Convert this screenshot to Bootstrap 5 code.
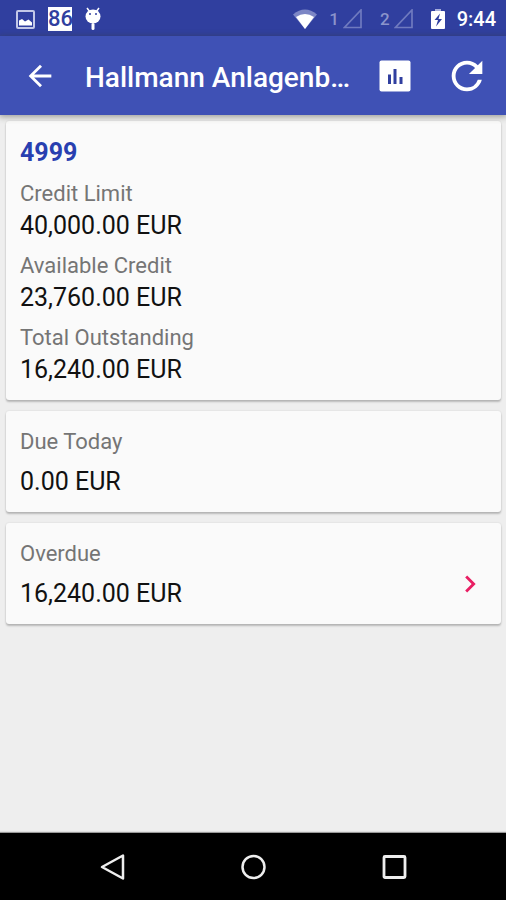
<!DOCTYPE html>
<html lang="en">
<head>
<meta charset="utf-8">
<meta name="viewport" content="width=device-width, initial-scale=1">
<title>Hallmann Anlagenbau – Credit</title>
<link href="https://cdn.jsdelivr.net/npm/bootstrap@5.3.0/dist/css/bootstrap.min.css" rel="stylesheet">
<style>
  body { background: #eee; font-family: Roboto, "Liberation Sans", sans-serif; }
  svg { display: block; flex: none; }
  .status-bar { background: #303f9f; height: 36px; padding: 2px 10px 0 16px; color: #fff; }
  .status-bar .sim { color: #8b94cb; font-size: 17px; font-weight: 500; line-height: 20px; }
  .count-badge { background: #fff; color: #303f9f; width: 24px; height: 24px; font-size: 22px; font-weight: 500; line-height: 24px; text-align: center; margin: 0 10px 0 13px; }
  .signals { gap: 18px; }
  .wifi { margin-right: 12px; }
  .clock { font-size: 20px; font-weight: 500; line-height: 24px; }
  .app-bar { background: #3f51b5; height: 79px; padding: 0 16px 0 23px; box-shadow: 0 1px 6px 1px rgba(60, 65, 50, .45); z-index: 1; }
  .app-bar h1 { color: #fff; font-size: 28px; font-weight: 500; line-height: 36px; }
  .app-bar .btn { --bs-btn-color: #fff; --bs-btn-hover-color: #fff; --bs-btn-active-color: #fff; }
  .refresh { margin-left: 33px; }
  .panels { display: grid; gap: 11px; padding: 6px 5px 6px 6px; }
  .panel { --bs-card-bg: #fafafa; --bs-card-border-width: 0; --bs-card-border-radius: 3px; padding: 15px 14px 14px; box-shadow: 0 2px 2px rgba(0, 0, 0, .22), 0 0 2px rgba(0, 0, 0, .12); color: #111; }
  .account { color: #283fb0; font-size: 25px; font-weight: 700; line-height: 34px; margin-bottom: 8px; }
  .figures { display: grid; gap: 8px; }
  dt { color: #757575; font-size: 22px; font-weight: 400; line-height: 32px; }
  dd { margin: 0; font-size: 25px; line-height: 32px; }
  .open-overdue { margin-bottom: 9px; }
  .nav-keys { background: #000; height: 67px; box-shadow: 0 -1px 1px #999; }
  .nav-keys .btn { width: 28%; }
</style>
</head>
<body class="d-flex flex-column min-vh-100">
<div class="status-bar d-flex align-items-center justify-content-between">
  <div class="d-flex align-items-center">
    <svg width="19" height="19" viewBox="0 0 19 19" aria-hidden="true"><rect x="1" y="1" width="17" height="17" rx="1" fill="none" stroke="#c3c8e8" stroke-width="2"/><path d="M3 15.500v-5l3-1.500 3 2.500 3.500-2 3.500 3v3z" fill="#fff"/></svg>
    <span class="count-badge">86</span>
    <svg width="22" height="24" viewBox="0 0 22 24" fill="#fff" aria-hidden="true"><path d="M5 1l3 4M17 1l-3 4" stroke="#fff" stroke-width="1.500"/><ellipse cx="11" cy="9.500" rx="7.500" ry="7"/><rect x="9.500" y="16" width="3" height="7" rx="1.500"/><circle cx="8" cy="7" r="1" fill="#303f9f"/><circle cx="14" cy="7" r="1" fill="#303f9f"/></svg>
  </div>
  <div class="signals d-flex align-items-center">
    <div class="d-flex align-items-center">
      <svg class="wifi" width="24" height="20" viewBox="0 0 24 20" aria-hidden="true"><path d="M0 5.500Q12-4.500 24 5.500L12 20z" fill="#7c86c5"/><path d="M3 8Q12 2 21 8L12 20z" fill="#fff"/></svg>
      <span class="sim">1</span>
      <svg class="ms-1" width="19" height="20" viewBox="0 0 19 20" aria-hidden="true"><path d="M18 1v17.500H1.500z" fill="none" stroke="#6f7abf" stroke-width="1.700"/></svg>
    </div>
    <div class="d-flex align-items-center">
      <span class="sim">2</span>
      <svg class="ms-1" width="19" height="20" viewBox="0 0 19 20" aria-hidden="true"><path d="M18 1v17.500H1.500z" fill="none" stroke="#6f7abf" stroke-width="1.700"/></svg>
    </div>
    <div class="d-flex align-items-center">
      <svg width="14" height="22" viewBox="0 0 14 22" aria-hidden="true"><path d="M4 3V1h6v2z" fill="#a7aedb"/><rect y="3" width="14" height="18" rx="1" fill="#fff"/><path d="M9 5.500L3.500 12H7l-2 6.500 6-7.500H7.500z" fill="#303f9f"/></svg>
      <span class="clock ps-2 ms-1">9:44</span>
    </div>
  </div>
</div>
<header class="app-bar d-flex align-items-center position-relative">
  <button type="button" class="btn border-0 p-0" aria-label="Back"><svg width="34" height="34" viewBox="0 0 24 24" fill="currentColor"><path d="M20 11H7.830l5.590-5.590L12 4l-8 8 8 8 1.410-1.410L7.830 13H20v-2z"/></svg></button>
  <h1 class="mb-0 ms-4 ps-1 me-auto pt-1 text-truncate">Hallmann Anlagenb…</h1>
  <button type="button" class="btn border-0 p-0" aria-label="Statistics"><svg width="32" height="32" viewBox="0 0 32 32"><rect x=".5" y=".5" width="31" height="31" rx="2" fill="#fff"/><path d="M9 14.500h3v9.500H9zM14.500 9h3v15h-3zM20.500 17h3v7h-3z" fill="#303f9f"/></svg></button>
  <button type="button" class="btn border-0 p-0 refresh" aria-label="Refresh"><svg width="46" height="46" viewBox="0 0 24 24" fill="currentColor"><path d="M17.650 6.350A7.958 7.958 0 0 0 12 4c-4.420 0-7.990 3.580-7.990 8s3.570 8 7.990 8c3.730 0 6.840-2.550 7.730-6h-2.080A5.990 5.990 0 0 1 12 18c-3.310 0-6-2.690-6-6s2.690-6 6-6c1.660 0 3.140.690 4.220 1.780L13 11h7V4l-2.350 2.350z"/></svg></button>
</header>
<main class="panels">
  <section class="card panel">
    <h2 class="account">4999</h2>
    <dl class="figures mb-0">
      <div><dt>Credit Limit</dt><dd>40,000.00 EUR</dd></div>
      <div><dt>Available Credit</dt><dd>23,760.00 EUR</dd></div>
      <div><dt>Total Outstanding</dt><dd>16,240.00 EUR</dd></div>
    </dl>
  </section>
  <section class="card panel">
    <dl class="mb-0"><dt class="mb-2">Due Today</dt><dd>0.00 EUR</dd></dl>
  </section>
  <section class="card panel flex-row align-items-end justify-content-between">
    <dl class="mb-0"><dt class="mb-2">Overdue</dt><dd>16,240.00 EUR</dd></dl>
    <button type="button" class="btn border-0 p-0 open-overdue" aria-label="Show overdue"><svg width="34" height="34" viewBox="0 0 24 24" fill="#e91e63"><path d="M10 6L8.590 7.410 13.170 12l-4.580 4.590L10 18l6-6z"/></svg></button>
  </section>
</main>
<nav class="nav-keys d-flex justify-content-center align-items-center mt-auto" aria-label="System">
  <button type="button" class="btn border-0 p-0 d-flex justify-content-center" aria-label="Back"><svg width="28" height="28" viewBox="0 0 28 28" fill="none" stroke="#eee" stroke-width="2.500" stroke-linejoin="round"><path d="M26 2.500v23L5 14z"/></svg></button>
  <button type="button" class="btn border-0 p-0 d-flex justify-content-center" aria-label="Home"><svg width="28" height="28" viewBox="0 0 28 28" fill="none" stroke="#eee" stroke-width="2.500"><circle cx="14.500" cy="14" r="11"/></svg></button>
  <button type="button" class="btn border-0 p-0 d-flex justify-content-center" aria-label="Recent apps"><svg width="28" height="28" viewBox="0 0 28 28" fill="none" stroke="#eee" stroke-width="2.800" stroke-linejoin="round"><rect x="3" y="3.500" width="21" height="21" rx="1"/></svg></button>
</nav>
<script src="https://cdn.jsdelivr.net/npm/bootstrap@5.3.0/dist/js/bootstrap.bundle.min.js"></script>
</body>
</html>
